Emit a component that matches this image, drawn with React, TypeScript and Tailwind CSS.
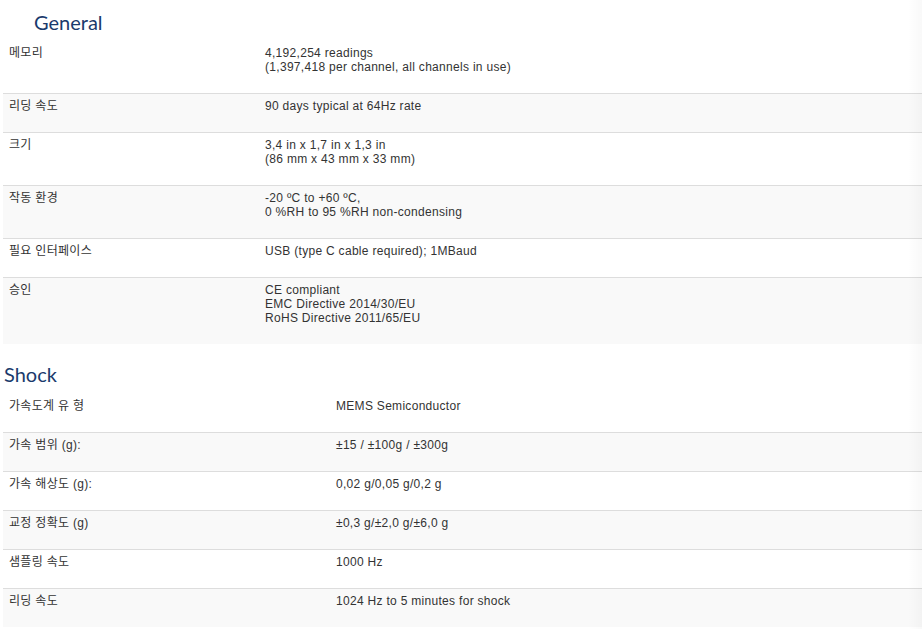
const general: [string, string[]][] = [
  ["메모리", ["4,192,254 readings", "(1,397,418 per channel, all channels in use)"]],
  ["리딩 속도", ["90 days typical at 64Hz rate"]],
  ["크기", ["3,4 in x 1,7 in x 1,3 in", "(86 mm x 43 mm x 33 mm)"]],
  ["작동 환경", ["-20 ºC to +60 ºC,", "0 %RH to 95 %RH non-condensing"]],
  ["필요 인터페이스", ["USB (type C cable required); 1MBaud"]],
  ["승인", ["CE compliant", "EMC Directive 2014/30/EU", "RoHS Directive 2011/65/EU"]],
];

const shock: [string, string[]][] = [
  ["가속도계 유 형", ["MEMS Semiconductor"]],
  ["가속 범위 (g):", ["±15 / ±100g / ±300g"]],
  ["가속 해상도 (g):", ["0,02 g/0,05 g/0,2 g"]],
  ["교정 정확도 (g)", ["±0,3 g/±2,0 g/±6,0 g"]],
  ["샘플링 속도", ["1000 Hz"]],
  ["리딩 속도", ["1024 Hz to 5 minutes for shock"]],
];

function SpecTable({ rows, labelWidth }: { rows: [string, string[]][]; labelWidth: string }) {
  return (
    <div className="ml-[3px] mr-[2px]">
      {rows.map(([label, lines], i) => (
        <div
          key={label + i}
          className={`flex pt-[5px] pb-[19px] ${i > 0 ? "border-t border-[#dddddd]" : ""} ${i % 2 === 1 ? "bg-[#f9f9f9]" : "bg-white"}`}
        >
          <div className={`${labelWidth} shrink-0 pl-[6px]`}>{label}</div>
          <div className="flex-1">
            {lines.map((l) => (
              <div key={l}>{l}</div>
            ))}
          </div>
        </div>
      ))}
    </div>
  );
}

export default function App() {
  return (
    <div className="relative w-[924px] h-[629px] overflow-hidden bg-white text-[12px] leading-[14px] tracking-[0.3px] text-[#333333] font-['Liberation_Sans','Noto_Sans_CJK_KR',sans-serif]">
      {/* General */}
      <h2 className="pl-[34px] pt-[9px] h-[41px] text-[20px] leading-[26px] tracking-normal text-[#1a3a6c] font-['Lato','Noto_Sans',sans-serif]">
        General
      </h2>
      <SpecTable rows={general} labelWidth="w-[262px]" />

      {/* Shock */}
      <h2 className="pl-[4px] pt-[17px] h-[50px] text-[20px] leading-[26px] tracking-normal text-[#1a3a6c] font-['Lato','Noto_Sans',sans-serif]">
        Shock
      </h2>
      <SpecTable rows={shock} labelWidth="w-[333px]" />

      {/* right edge shade */}
      <div className="pointer-events-none absolute top-0 bottom-0 right-[2px] w-[14px] bg-gradient-to-l from-black/[0.025] to-transparent" />
    </div>
  );
}
